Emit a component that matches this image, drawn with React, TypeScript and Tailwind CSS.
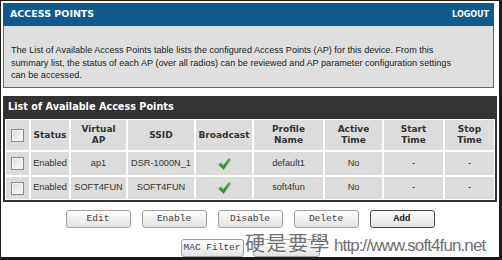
import React from "react";

const reg = { fontFamily: '"Liberation Sans", Arial, sans-serif' };
const bold = { fontFamily: '"DejaVu Sans", Verdana, sans-serif', fontWeight: 700 as const };
const mono = { fontFamily: '"Liberation Mono", "Courier New", monospace' };

function Box() {
  return (
    <div className="w-[13px] h-[13px] border border-[#8c8c8c] bg-gradient-to-br from-[#dcdcdc] to-[#fafafa] shadow-[inset_0_0_0_1px_#f4f4f4]" />
  );
}

function Check() {
  return (
    <svg width="13" height="12" viewBox="0 0 13 12">
      <defs>
        <linearGradient id="g" x1="0" y1="0" x2="0" y2="1">
          <stop offset="0" stopColor="#5cc24a" />
          <stop offset="1" stopColor="#1f8a22" />
        </linearGradient>
      </defs>
      <path d="M0.6 6.8 L2.8 5 L5.2 7.4 L10.8 0.6 L12.6 1.8 L5.6 11.4 Z" fill="url(#g)" stroke="#2a8a2a" strokeWidth="0.5" strokeLinejoin="round" />
    </svg>
  );
}

const cols = "grid grid-cols-[23px_38px_55px_66px_56px_69px_57px_59px_49px] gap-[2px]";

function Cell({ children, className = "" }: { children?: React.ReactNode; className?: string }) {
  return (
    <div className={`bg-[#dcdcdc] flex items-center justify-center text-center ${className}`}>{children}</div>
  );
}

function Btn({ label, strong = false, w = "w-[65px]" }: { label: string; strong?: boolean; w?: string }) {
  return (
    <div
      className={`${w} h-[18px] rounded-[3px] flex items-center justify-center bg-gradient-to-b from-[#fdfdfd] to-[#e2e2e2] text-[9.5px] ${
        strong ? "border-[1.5px] border-[#4a4a4a] font-bold text-[#222]" : "border border-[#a0a0a0] text-[#444]"
      }`}
      style={mono}
    >
      {label}
    </div>
  );
}

export default function App() {
  const headers: [string, string?][] = [
    ["Status"],
    ["Virtual", "AP"],
    ["SSID"],
    ["Broadcast"],
    ["Profile", "Name"],
    ["Active", "Time"],
    ["Start", "Time"],
    ["Stop", "Time"],
  ];
  const rows = [
    ["Enabled", "ap1", "DSR-1000N_1", "default1", "No", "-", "-"],
    ["Enabled", "SOFT4FUN", "SOFT4FUN", "soft4fun", "No", "-", "-"],
  ];
  return (
    <div className="relative w-[502px] h-[260px] bg-white border-l border-t border-r-[3px] border-b-[3px] border-[#1c1c1c] overflow-hidden">
      <div className="pl-[2px] pt-[2px] pr-[2px] flex flex-col">
        <div className="mr-[3px] h-[23px] bg-[#0e5a8e] flex items-center justify-between pl-[7px] pr-[5px] text-white">
          <span className="text-[9.5px]" style={bold}>ACCESS POINTS</span>
          <span className="text-[8px]" style={bold}>LOGOUT</span>
        </div>
        <div
          className="mr-[3px] h-[62px] bg-[#dfdfdf] border-x border-b border-[#3b6f99] pl-[7px] pt-[18px] text-[9.1px] leading-[12.5px] text-[#1a1a1a]"
          style={reg}
        >
          The List of Available Access Points table lists the configured Access Points (AP) for this device. From this
          <br />
          summary list, the status of each AP (over all radios) can be reviewed and AP parameter configuration settings
          <br />
          can be accessed.
        </div>
        <div className="mt-[8px] h-[23px] bg-[#333333] flex items-center pl-[5px] text-white text-[9.7px]" style={bold}>
          List of Available Access Points
        </div>
        <div className="border-x-2 border-b-2 border-[#333333] bg-white px-[1px] pt-[1px] pb-[1px]">
          <div className={cols}>
            <Cell className="h-[30px]"><Box /></Cell>
            {headers.map((h) => (
              <Cell key={h[0]} className="h-[30px] text-[9px] leading-[11px] text-[#333]">
                <span style={bold}>
                  {h[0]}
                  {h[1] && (
                    <>
                      <br />
                      {h[1]}
                    </>
                  )}
                </span>
              </Cell>
            ))}
            {rows.map((r, i) => (
              <React.Fragment key={i}>
                <Cell className={i === 0 ? "h-[23px]" : "h-[22px]"}><Box /></Cell>
                {[r[0], r[1], r[2], "__check", r[3], r[4], r[5], r[6]].map((v, j) => (
                  <Cell key={j} className={`text-[9.2px] text-[#333] ${i === 0 ? "h-[23px]" : "h-[22px]"}`}>
                    {v === "__check" ? <Check /> : <span style={reg}>{v}</span>}
                  </Cell>
                ))}
              </React.Fragment>
            ))}
          </div>
        </div>
        <div className="mt-[8px] flex justify-center gap-[11px]">
          <Btn label="Edit" />
          <Btn label="Enable" />
          <Btn label="Disable" />
          <Btn label="Delete" />
          <Btn label="Add" strong />
        </div>
        <div className="mt-[11px] flex justify-center gap-[9px]">
          <Btn label="MAC Filter" w="w-[63px]" />
          <Btn label="" w="w-[67px]" />
        </div>
      </div>
      <div className="absolute left-[244px] top-[230px] whitespace-nowrap leading-[24px] text-[#707070] [text-shadow:0_0_2px_#fff,0_0_2px_#fff]">
        <span className="text-[20px] tracking-[1.5px]" style={{ fontFamily: '"Noto Sans CJK TC", "Noto Sans CJK SC", sans-serif' }}>
          硬是要學
        </span>
        <span className="text-[17px] tracking-[-0.9px] ml-[3px]" style={reg}>
          http://www.soft4fun.net
        </span>
      </div>
    </div>
  );
}
